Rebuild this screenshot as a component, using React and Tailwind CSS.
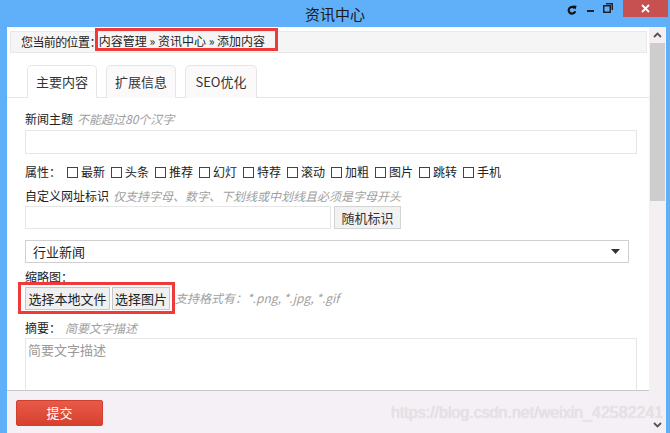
const cn = { fontFamily: '"Noto Sans CJK SC", "Microsoft YaHei", sans-serif' }

const attrs = ['最新', '头条', '推荐', '幻灯', '特荐', '滚动', '加粗', '图片', '跳转', '手机']

function TitleBar() {
  return (
    <div className="relative h-[27px] flex items-center justify-center bg-[#60b0f9]">
      <span className="text-[15px] text-[#1a1a1a] leading-none" style={cn}>资讯中心</span>
      <div className="absolute right-[2px] top-0 flex items-start">
        {/* refresh */}
        <svg width="10" height="10" viewBox="0 0 10 10" className="mt-[5px] mr-[10px]">
          <path d="M7.6 3.2 A3.3 3.3 0 1 0 8.2 6.2" fill="none" stroke="#111" strokeWidth="2.2" />
          <path d="M5.6 0.6 L9.6 0.8 L8.6 4.6 Z" fill="#111" />
        </svg>
        {/* minimize */}
        <span className="mt-[10px] mr-[9px] w-[7px] h-[2px] bg-[#222]" />
        {/* restore */}
        <svg width="10" height="10" viewBox="0 0 10 10" className="mt-[3px] mr-[10px]">
          <rect x="0.75" y="2.75" width="6.5" height="6.5" fill="none" stroke="#222" strokeWidth="1.5" />
          <path d="M3 0.75 H9.25 V7" fill="none" stroke="#222" strokeWidth="1.5" />
        </svg>
        <div className="w-[45px] h-[17px] bg-[#c75050] flex items-center justify-center">
          <svg width="9" height="9" viewBox="0 0 9 9">
            <path d="M1 1 L8 8 M8 1 L1 8" stroke="#fff" strokeWidth="1.8" />
          </svg>
        </div>
      </div>
    </div>
  )
}

function Checkbox({ label }) {
  return (
    <span className="flex items-center w-[44px] shrink-0">
      <span className="w-[11px] h-[11px] border border-[#444] bg-white mr-[3px]" />
      <span>{label}</span>
    </span>
  )
}

function Tabs() {
  const tabs = [
    { t: '主要内容', w: 'w-[70px]', active: true },
    { t: '扩展信息', w: 'w-[70px]' },
    { t: 'SEO优化', w: 'w-[72px]' },
  ]
  return (
    <div className="mt-[12px] flex gap-[9px] pl-[20px] border-b border-[#e6e6e6] h-[33px]">
      {tabs.map((tab) => (
        <div
          key={tab.t}
          className={`${tab.w} h-[33px] flex items-center justify-center text-[13px] text-[#333] rounded-t-[5px] border border-[#e6e6e6] ${tab.active ? 'bg-white border-b-white' : 'bg-[#fcf9fb] border-b-0 h-[32px]'}`}
        >
          {tab.t}
        </div>
      ))}
    </div>
  )
}

function Hint({ children }) {
  return <span className="italic text-[#a0a0a0] ml-[4px]">{children}</span>
}

function Form() {
  return (
    <div className="pl-[18px] pr-[12px] text-[12px] text-[#222]">
      <div className="mt-[13px] h-[16px] flex items-center">
        新闻主题<Hint>不能超过80个汉字</Hint>
      </div>
      <div className="mt-[3px] h-[24px] border border-[#e6e6e6] bg-white" />

      <div className="mt-[10px] h-[16px] flex items-center">
        <span className="w-[42px] shrink-0">属性：</span>
        {attrs.map((a) => (
          <Checkbox key={a} label={a} />
        ))}
      </div>

      <div className="mt-[8px] h-[16px] flex items-center">
        自定义网址标识<Hint>仅支持字母、数字、下划线或中划线且必须是字母开头</Hint>
      </div>
      <div className="mt-[2px] flex gap-[3px]">
        <div className="w-[306px] h-[23px] border border-[#e6e6e6] bg-white" />
        <button className="w-[67px] h-[23px] border border-[#d4d4d4] bg-[#f2f2f2] text-[13px] text-[#333] flex items-center justify-center">
          随机标识
        </button>
      </div>

      <div className="mt-[11px] w-[604px] h-[23px] border border-[#d0d0d0] bg-white flex items-center pl-[7px] pr-[8px] text-[13px]">
        <span className="flex-1">行业新闻</span>
        <svg width="9" height="5" viewBox="0 0 9 5">
          <path d="M0 0 H9 L4.5 5 Z" fill="#333" />
        </svg>
      </div>

      <div className="mt-[6px] h-[16px] flex items-center">缩略图：</div>
      <div className="-mt-[3px] -ml-[7px] flex items-center">
        <div className="flex gap-[2px] border-[3px] border-[#ef3a3a] pl-[4px] pr-[2px] pt-[2px] pb-[1px]">
          <button className="w-[85px] h-[23px] border border-[#c8c8c8] bg-[#f0f0f0] text-[13px] text-[#222] flex items-center justify-center">
            选择本地文件
          </button>
          <button className="w-[58px] h-[23px] border border-[#c8c8c8] bg-[#f0f0f0] text-[13px] text-[#222] flex items-center justify-center">
            选择图片
          </button>
        </div>
        <span className="italic text-[#a0a0a0]">支持格式有：*.png, *.jpg, *.gif</span>
      </div>

      <div className="mt-[6px] h-[16px] flex items-center">
        摘要：<Hint>简要文字描述</Hint>
      </div>
      <div className="mt-[2px] h-[80px] border border-[#e6e6e6] bg-white pl-[2px] pt-[1px] text-[13px] text-[#999]">
        简要文字描述
      </div>
    </div>
  )
}

function Scrollbar() {
  return (
    <div className="w-[17px] flex flex-col bg-[#f3eff3]">
      <div className="h-[16px] flex items-center justify-center">
        <svg width="9" height="6" viewBox="0 0 9 6">
          <path d="M1 5 L4.5 1.5 L8 5" fill="none" stroke="#555" strokeWidth="1.8" />
        </svg>
      </div>
      <div className="mx-[1px] h-[158px] bg-[#cdcdcd]" />
      <div className="flex-1" />
      <div className="h-[16px] flex items-center justify-center">
        <svg width="9" height="6" viewBox="0 0 9 6">
          <path d="M1 1 L4.5 4.5 L8 1" fill="none" stroke="#555" strokeWidth="1.8" />
        </svg>
      </div>
    </div>
  )
}

export default function App() {
  return (
    <div className="relative w-[670px] h-[433px] bg-[#60b0f9] flex flex-col overflow-hidden" style={cn}>
      <TitleBar />
      <div className="flex-1 flex min-h-0">
        <div className="w-[7px]" />
        <div className="flex-1 flex flex-col bg-white min-h-0">
          <div className="flex-1 overflow-hidden">
            {/* breadcrumb */}
            <div className="mt-[4px] ml-[3px] mr-[2px] h-[22px] bg-[#f5f5f5] border border-[#e8e8e8] flex items-start pl-[10px] text-[12px] text-[#222]">
              <span className="mt-[2px] leading-[16px] tracking-[-0.6px]">您当前的位置：</span>
              <span className="-mt-[4px] -ml-[6px] h-[23px] border-[3px] border-[#ef3a3a] flex items-center pt-[3px] pl-[1px] pr-[10px]">
                内容管理 » 资讯中心 » 添加内容
              </span>
            </div>
            <Tabs />
            <Form />
          </div>
          <div className="h-[43px] shrink-0 border-t border-[#c8c8c8] bg-[#f5f0f5] pl-[9px] pt-[9px]">
            <button className="w-[87px] h-[26px] rounded-[2px] border border-[#d04030] bg-gradient-to-b from-[#e85a48] to-[#d8402e] text-white text-[13px] flex items-center justify-center">
              提交
            </button>
          </div>
        </div>
        <Scrollbar />
        <div className="w-[4px]" />
      </div>
      <div
        className="absolute left-[391px] top-[405px] text-[16px] text-[#e6e3e6] leading-none pointer-events-none whitespace-nowrap"
        style={{ fontFamily: '"Liberation Sans", Arial, sans-serif', textShadow: '0 0 1px rgba(0,0,0,0.15)' }}
      >
        https://blog.csdn.net/weixin_42582241
      </div>
    </div>
  )
}
